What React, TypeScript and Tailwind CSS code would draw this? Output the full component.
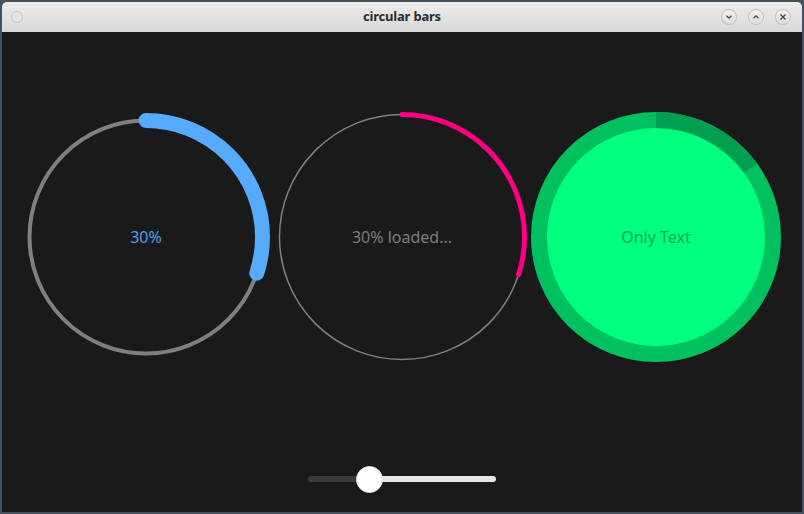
import React from "react";

const FONT = { fontFamily: '"Noto Sans", "Open Sans", sans-serif' };

function ArcCircle({
  r,
  track,
  trackWidth,
  bar,
  barWidth,
  value,
  cap,
  fill,
}: {
  r: number;
  track: string;
  trackWidth: number;
  bar: string;
  barWidth: number;
  value: number;
  cap: "round" | "butt";
  fill?: string;
}) {
  const c = 2 * Math.PI * r;
  return (
    <svg width="250" height="250" viewBox="0 0 250 250" className="absolute inset-0">
      {fill && <circle cx="125" cy="125" r={r} fill={fill} />}
      <circle cx="125" cy="125" r={r} fill="none" stroke={track} strokeWidth={trackWidth} />
      <circle
        cx="125"
        cy="125"
        r={r}
        fill="none"
        stroke={bar}
        strokeWidth={barWidth}
        strokeLinecap={cap}
        strokeDasharray={`${c * value} ${c}`}
        transform="rotate(-90 125 125)"
      />
    </svg>
  );
}

function TitleButton({ children }: { children: React.ReactNode }) {
  return (
    <div className="w-[16px] h-[16px] rounded-full border border-[#bdbdbd] bg-gradient-to-b from-[#f2f2f2] to-[#dcdcdc] flex items-center justify-center">
      {children}
    </div>
  );
}

export default function App() {
  return (
    <div className="w-[804px] h-[514px] bg-[#45515c] p-[2px]" style={FONT}>
      <div className="w-[800px] h-[510px] flex flex-col rounded-t-[5px] overflow-hidden">
        {/* title bar */}
        <div className="h-[30px] bg-gradient-to-b from-[#ececec] to-[#d9d9d9] grid grid-cols-[1fr_auto_1fr] items-center px-[9px]">
          <div>
            <div className="w-[12px] h-[12px] rounded-full border border-[#c4c4c4] bg-[#e4e4e4]" />
          </div>
          <div className="text-[13px] font-bold text-[#2b2b2b] tracking-[-0.2px]">circular bars</div>
          <div className="flex justify-end gap-[11px] pr-[2px]">
            <TitleButton>
              <svg width="8" height="8" viewBox="0 0 8 8">
                <path d="M1.5 2.8 L4 5.2 L6.5 2.8" fill="none" stroke="#444" strokeWidth="1.3" />
              </svg>
            </TitleButton>
            <TitleButton>
              <svg width="8" height="8" viewBox="0 0 8 8">
                <path d="M1.5 5.2 L4 2.8 L6.5 5.2" fill="none" stroke="#444" strokeWidth="1.3" />
              </svg>
            </TitleButton>
            <TitleButton>
              <svg width="8" height="8" viewBox="0 0 8 8">
                <path d="M1.5 1.5 L6.5 6.5 M6.5 1.5 L1.5 6.5" fill="none" stroke="#444" strokeWidth="1.3" />
              </svg>
            </TitleButton>
          </div>
        </div>

        {/* content */}
        <div className="h-[480px] bg-[#1a1a1a] flex flex-col items-center">
          <div className="flex pt-[80px]">
            <div className="relative w-[250px] h-[250px] flex items-center justify-center">
              <ArcCircle r={116.5} track="#808080" trackWidth={4} bar="#56aaff" barWidth={15} value={0.3} cap="round" />
              <span className="relative text-[16px] text-[#4d9fec]">30%</span>
            </div>
            <div className="relative w-[250px] h-[250px] ml-[6px] flex items-center justify-center">
              <ArcCircle r={122.5} track="#808080" trackWidth={1.5} bar="#ff0080" barWidth={5} value={0.3} cap="round" />
              <span className="relative text-[16px] text-[#7c7c7c]">30% loaded...</span>
            </div>
            <div className="relative w-[250px] h-[250px] ml-[4px] mr-[2px] flex items-center justify-center">
              <ArcCircle r={117} track="#00c060" trackWidth={16} bar="#00a050" barWidth={16} value={0.15} cap="butt" fill="#00ff80" />
              <span className="relative text-[16px] text-[#00a852]">Only Text</span>
            </div>
          </div>

          {/* slider */}
          <div className="relative w-[188px] h-[28px] mt-[103px] flex items-center">
            <div className="flex w-full h-[6px] rounded-full overflow-hidden">
              <div className="w-[62px] bg-[#3a3a3a]" />
              <div className="flex-1 bg-[#e6e6e6]" />
            </div>
            <div className="absolute left-[48px] top-[0.5px] w-[27px] h-[27px] rounded-full bg-white border border-[#e2e2e2]" />
          </div>
        </div>
      </div>
    </div>
  );
}
